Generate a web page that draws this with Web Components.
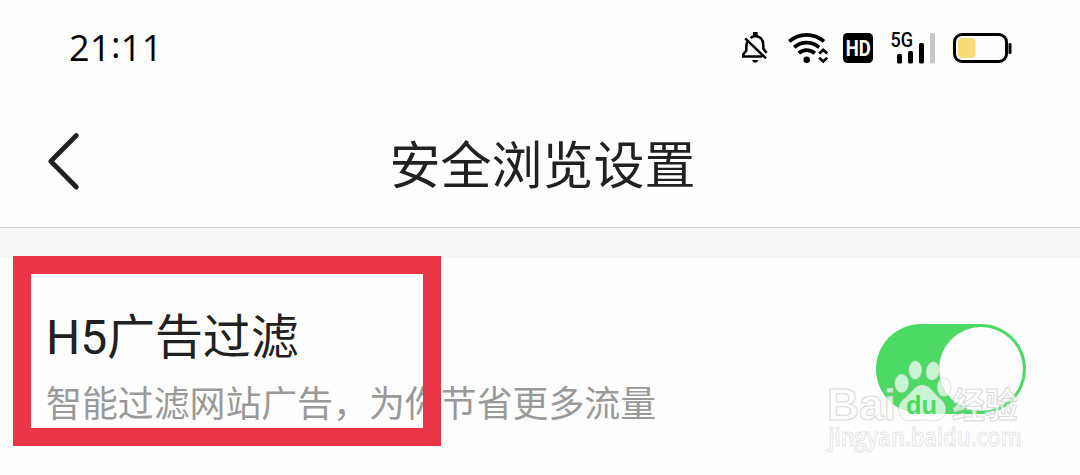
<!DOCTYPE html>
<html lang="zh-CN">
<head>
<meta charset="utf-8">
<title>安全浏览设置</title>
<style>
  html, body {
    margin: 0;
    height: 100%;
    overflow: hidden;
    background: #fefefe;
  }
</style>
</head>
<body>
<settings-page>
  <status-bar time="21:11"></status-bar>
  <nav-header>安全浏览设置</nav-header>
  <setting-item>
    <span slot="title">H5广告过滤</span>
    <span slot="desc">智能过滤网站广告，为你节省更多流量</span>
    <toggle-switch slot="control"></toggle-switch>
  </setting-item>
  <mark-box slot="overlay"></mark-box>
  <water-mark slot="overlay"></water-mark>
</settings-page>

<script>
class BaseElement extends HTMLElement {
  constructor() {
    super();
    this.attachShadow({ mode: 'open' });
    this.shadowRoot.innerHTML = this.constructor.markup;
  }
}

class SettingsPage extends BaseElement {
  static markup = `
    <style>
      :host {
        position: relative;
        display: flex;
        flex-direction: column;
        width: 1080px;
        height: 475px;
        overflow: hidden;
        color: #212121;
        font-family: Roboto, "Noto Sans CJK SC", sans-serif;
      }
    </style>
    <slot></slot>
    <slot name="overlay"></slot>
  `;
}

class StatusBar extends BaseElement {
  static markup = `
    <style>
      :host {
        display: flex;
        align-items: center;
        justify-content: space-between;
        box-sizing: border-box;
        height: 96px;
        padding: 0 68px 0 69px;
        color: #000;
      }
      .time {
        font: 36px/48px "Open Sans", sans-serif;
        letter-spacing: 0.4px;
      }
      .colon {
        position: relative;
        top: -3px;
      }
      .icons {
        display: flex;
        align-items: center;
      }
      svg {
        display: block;
        overflow: visible;
      }
      .wifi { margin-left: 18px; }
      .hd { margin-left: 14px; }
      .signal { margin-left: 18px; }
      .battery { margin-left: 17px; }
    </style>
    <div class="time"></div>
    <div class="icons">
      <svg class="bell" width="28" height="32" viewBox="0 0 28 32" fill="none" stroke="#000" stroke-width="2.5">
        <path d="M8.6 6.1Q10 4.4 12.2 4.2V1.2H14.4V4.2Q21 5.2 21.3 13V16.5L24.6 21"/>
        <path d="M5.3 9.8Q4.3 12 4.3 15V18.5L1.2 22.4V24.6H20.2"/>
        <path d="M3.2 6.4L24 26.4"/>
        <path d="M10 28H16.5Q15.7 30.7 13.2 30.7Q10.8 30.7 10 28Z" fill="#000" stroke="none"/>
      </svg>
      <svg class="wifi" width="41" height="32" viewBox="0 0 41 32" fill="none" stroke="#000">
        <g stroke-width="3.8">
          <path d="M1.2 9.4Q9 2.8 18.5 2.8Q28.5 2.8 36 9.4"/>
          <path d="M6.2 15.4Q11.5 10.6 18.5 10.6Q25.6 10.6 31.2 15.4"/>
          <path d="M10.8 21.2Q14 18.1 18.5 18.1Q23.2 18.1 26.8 21.2"/>
        </g>
        <circle cx="18.7" cy="27.7" r="3.3" fill="#000" stroke="none"/>
        <path d="M31.2 21.6L35.2 17.9L39.2 21.6M31.2 25.8L35.2 29.5L39.2 25.8" stroke-width="2.7"/>
      </svg>
      <svg class="hd" width="30" height="30" viewBox="0 0 30 30">
        <rect width="30" height="30" rx="4.5"/>
        <text x="2.7" y="22.8" textLength="25" lengthAdjust="spacingAndGlyphs" font-family="Roboto, sans-serif" font-weight="700" font-size="22.5" fill="#fff">HD</text>
      </svg>
      <svg class="signal" width="45" height="32" viewBox="0 0 45 32">
        <text x="-0.5" y="15.2" textLength="22.5" lengthAdjust="spacingAndGlyphs" font-family="Roboto, sans-serif" font-weight="500" font-size="20">5G</text>
        <rect x="6" y="22" width="5" height="9.5" rx="1.5"/>
        <rect x="17" y="19" width="5" height="12.5" rx="1.5"/>
        <rect x="28" y="11" width="5" height="20.5" rx="1.5"/>
        <rect x="39" y="1" width="5" height="30.5" rx="1.5" fill="#c6c6c6"/>
      </svg>
      <svg class="battery" width="59" height="32" viewBox="0 0 59 32">
        <rect x="1.5" y="2.5" width="52" height="27" rx="7.5" fill="none" stroke="#000" stroke-width="3"/>
        <rect x="5" y="6" width="17.5" height="20" rx="4" fill="#fadb78"/>
        <rect x="55.5" y="11" width="3" height="11" rx="1.2"/>
      </svg>
    </div>
  `;

  connectedCallback() {
    const time = this.getAttribute('time').split(':');
    this.shadowRoot.querySelector('.time').innerHTML = time.join('<span class="colon">:</span>');
  }
}

class NavHeader extends BaseElement {
  static markup = `
    <style>
      :host {
        display: grid;
        grid-template-columns: 128px 1fr 128px;
        align-items: center;
        box-sizing: border-box;
        height: 132px;
        border-bottom: 1px solid #d2d2d2;
      }
      svg {
        display: block;
        margin: 0 0 2px 46px;
      }
      h1 {
        margin: 11px 0 0 5px;
        font-size: 51px;
        font-weight: 400;
        line-height: 72px;
        text-align: center;
      }
    </style>
    <svg width="36" height="60" viewBox="0 0 36 60" fill="none" stroke="#212121" stroke-width="4.8" stroke-linecap="round" stroke-linejoin="round">
      <path d="M30.3 4.5L4.8 30.3L30.3 56"/>
    </svg>
    <h1><slot></slot></h1>
  `;
}

class SettingItem extends BaseElement {
  static markup = `
    <style>
      :host {
        display: flex;
        align-items: center;
        justify-content: space-between;
        box-sizing: border-box;
        height: 247px;
        padding: 28px 54px 0 46px;
        border-top: 30px solid #f7f7f7;
      }
      .title {
        font-size: 48px;
        line-height: 66px;
        letter-spacing: -0.1px;
      }
      .desc {
        margin-top: 8px;
        color: #999;
        font-size: 35.9px;
        line-height: 52px;
        white-space: nowrap;
      }
      .text {
        margin-top: -25px;
      }
      .control {
        margin-top: -24px;
      }
    </style>
    <div class="text">
      <div class="title"><slot name="title"></slot></div>
      <div class="desc"><slot name="desc"></slot></div>
    </div>
    <div class="control"><slot name="control"></slot></div>
  `;
}

class ToggleSwitch extends BaseElement {
  static markup = `
    <style>
      :host {
        display: flex;
        justify-content: flex-end;
        box-sizing: border-box;
        width: 150px;
        height: 90px;
        padding: 3px;
        border-radius: 45px;
        background: #4cd964;
      }
      .knob {
        width: 84px;
        height: 84px;
        border-radius: 50%;
        background: #fefefe;
      }
    </style>
    <div class="knob"></div>
  `;
}

// red frame drawn over the setting
class MarkBox extends BaseElement {
  static markup = `
    <style>
      :host {
        position: absolute;
        left: 13px;
        top: 256px;
        box-sizing: border-box;
        width: 428px;
        height: 190px;
        border: 18px solid #ea3448;
      }
    </style>
  `;
}

class WaterMark extends BaseElement {
  static markup = `
    <style>
      :host {
        position: absolute;
        left: 820px;
        top: 350px;
      }
      svg {
        display: block;
      }
    </style>
    <svg width="210" height="110" viewBox="0 0 210 110" fill="#fff" fill-opacity=".7" stroke="#bbb" stroke-opacity=".55" stroke-width="1.1" stroke-linejoin="round">
      <text x="7" y="69.5" font-family="'Liberation Sans', sans-serif" font-weight="700" font-size="45" textLength="69" lengthAdjust="spacingAndGlyphs">Bai</text>
      <g stroke-opacity=".4">
        <ellipse cx="81.7" cy="33.3" rx="7" ry="9.3"/>
        <ellipse cx="95.3" cy="20" rx="6.5" ry="9.3"/>
        <ellipse cx="112.7" cy="21" rx="6.7" ry="9.3" transform="rotate(10 112.7 21)"/>
        <ellipse cx="124" cy="37.3" rx="7" ry="9.3"/>
        <path d="M102.3 35C95 35 92 42 86 47C80 52 77.5 56 79 62C80.5 69 86 71.5 93 70.5C99 69.7 105 69.7 111 70.5C118 71.5 124 69 125.5 62C127 56 124 52 118.5 47C112.500 42 110 35 102.3 35Z"/>
      </g>
      <text x="86" y="63.5" font-family="'Liberation Sans', sans-serif" font-weight="700" font-size="26" textLength="31" lengthAdjust="spacingAndGlyphs" fill="#4cd964" fill-opacity="1" stroke="none">du</text>
      <text x="132" y="67.500" font-family="'Noto Sans CJK SC', sans-serif" font-weight="700" font-size="35" textLength="66" lengthAdjust="spacingAndGlyphs">经验</text>
      <text x="8.500" y="95.5" font-family="'Open Sans', sans-serif" font-weight="600" font-size="24.5" textLength="193" lengthAdjust="spacingAndGlyphs" stroke-opacity=".4">jingyan.baidu.com</text>
    </svg>
  `;
}

customElements.define('settings-page', SettingsPage);
customElements.define('status-bar', StatusBar);
customElements.define('nav-header', NavHeader);
customElements.define('setting-item', SettingItem);
customElements.define('toggle-switch', ToggleSwitch);
customElements.define('mark-box', MarkBox);
customElements.define('water-mark', WaterMark);
</script>
</body>
</html>
